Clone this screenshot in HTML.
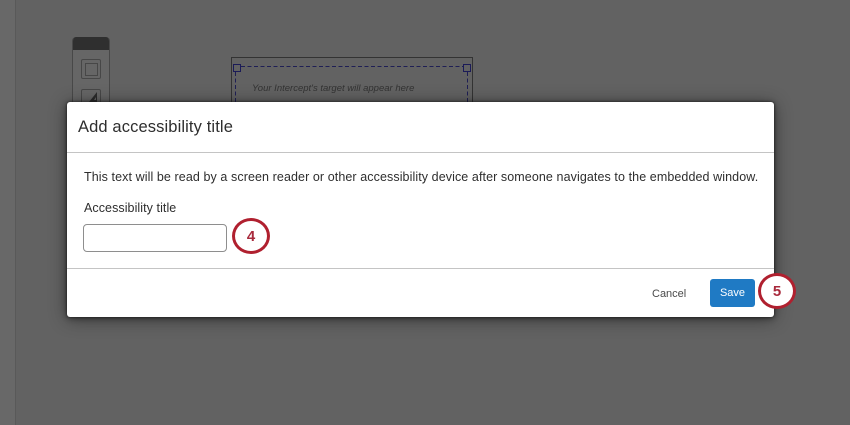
<!DOCTYPE html>
<html><head><meta charset="utf-8">
<style>
*{box-sizing:border-box}
html,body{margin:0;padding:0;width:850px;height:425px;overflow:hidden;background:#626262;font-family:"Liberation Sans",sans-serif}
.a{position:absolute}
.t{position:absolute;white-space:nowrap;color:#2e2e2e}
</style></head><body>
<div class="a" style="left:0;top:0;width:16px;height:425px;background:#686868;border-right:1px solid #595959"></div>
<div class="a" style="left:72px;top:37px;width:38px;height:70px;background:#666;border:1px solid #484848;border-top:0;border-radius:4px 4px 0 0;overflow:hidden">
 <div class="a" style="left:-1px;top:0;width:38px;height:13px;background:#2f2f2f"></div>
</div>
<div class="a" style="left:81px;top:59px;width:20px;height:20px;border:1px solid #474747;border-radius:2px"></div>
<div class="a" style="left:85px;top:63px;width:13px;height:13px;border:1px solid #474747"></div>
<div class="a" style="left:81px;top:89px;width:20px;height:20px;border:1px solid #474747;border-radius:2px"></div>
<svg class="a" style="left:88px;top:91px" width="11" height="12"><path d="M1 11 L9 1 L9 11 Z M6 9 L8 9 L8 6 Z" fill="#2c2c2c" fill-rule="evenodd"/></svg>
<div class="a" style="left:231px;top:57px;width:242px;height:50px;border:1px solid #333"></div>
<svg class="a" style="left:230px;top:60px" width="245" height="47"><path d="M11 6.5H234M5.5 12V47M237.5 12V47" fill="none" stroke="#1f1f55" stroke-width="1" stroke-dasharray="4 2.5"/><rect x="3.5" y="4.5" width="7" height="7" fill="#626262" stroke="#1b1b58"/><rect x="233.5" y="4.5" width="7" height="7" fill="#626262" stroke="#1b1b58"/></svg>
<div class="t" style="left:252px;top:83px;font-size:9.5px;font-style:italic;color:#333;line-height:12px">Your Intercept's target will appear here</div>

<div class="a" style="left:67px;top:102px;width:707px;height:215px;background:#fff;border-radius:3px;box-shadow:0 0 2px #1e1e1e,0 1px 6px rgba(0,0,0,.45),0 2px 18px rgba(0,0,0,.45)"></div>
<div class="t" style="left:78px;top:117px;font-size:16.5px;line-height:20px;letter-spacing:.12px">Add accessibility title</div>
<div class="a" style="left:67px;top:152px;width:707px;height:1px;background:#c4c4c4"></div>
<div class="t" style="left:84px;top:170px;font-size:12.5px;line-height:15px;letter-spacing:.09px">This text will be read by a screen reader or other accessibility device after someone navigates to the embedded window.</div>
<div class="t" style="left:84px;top:201px;font-size:12.5px;line-height:15px;letter-spacing:.07px">Accessibility title</div>
<div class="a" style="left:83px;top:224px;width:144px;height:28px;border:1px solid #8e8e8e;border-radius:4px;background:#fff"></div>
<div class="a" style="left:67px;top:268px;width:707px;height:1px;background:#c4c4c4"></div>
<div class="t" style="left:652px;top:287px;font-size:11px;line-height:14px;color:#4a4a4a">Cancel</div>
<div class="a" style="left:710px;top:279px;width:45px;height:28px;background:#1f7ac4;border-radius:3px;color:#fff;font-size:11px;line-height:28px;text-align:center">Save</div>

<div class="a" style="left:232px;top:218px;width:38px;height:36px;border:3px solid #b0202f;border-radius:50%;background:#fff;color:#a82a3c;font-size:15px;font-weight:700;line-height:31px;text-align:center">4</div>
<div class="a" style="left:758px;top:273px;width:38px;height:36px;border:3px solid #b0202f;border-radius:50%;background:#fff;color:#a82a3c;font-size:15px;font-weight:700;line-height:31px;text-align:center">5</div>
</body></html>
